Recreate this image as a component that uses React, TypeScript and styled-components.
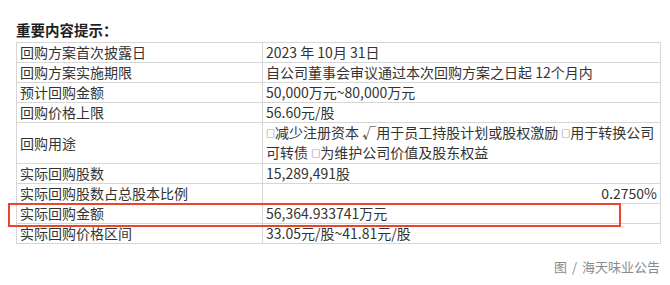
import React from 'react';
import styled, {createGlobalStyle} from 'styled-components';

const GlobalStyle = createGlobalStyle`
  body {
    margin: 0;
    background: #fff;
    font-family: "Noto Sans CJK SC", "Liberation Sans", sans-serif;
    color: #333;
  }
`;

const Page = styled.div`
  width: 670px;
  height: 285px;
  padding: 20px 9px 0 16px;
  box-sizing: border-box;
`;

const Title = styled.h3`
  margin: 0 0 2px;
  font-size: 14.5px;
  line-height: 20px;
  font-weight: 700;
  color: #1f1f1f;
`;

const Table = styled.table`
  border-collapse: collapse;
  width: 645px;
  table-layout: fixed;
  font-size: 14px;
  color: #333;
`;

const Cell = styled.td<{ $right?: boolean }>`
  border: 1px solid #d6d6d6;
  padding: 0 0 0 3px;
  height: 19px;
  line-height: 19px;
  white-space: nowrap;
  text-align: ${p => (p.$right ? 'right' : 'left')};
  ${p => p.$right && 'padding-right: 3px;'}
  vertical-align: middle;
  position: relative;
`;

const Box = styled.span`
  font-size: 9px;
  vertical-align: 1px;
`;

const Highlight = styled.span`
  position: absolute;
  left: -9px;
  top: -1px;
  width: 609px;
  height: 20px;
  border: 2px solid #e8452c;
  pointer-events: none;
`;

const Caption = styled.div`
  margin-top: 14px;
  text-align: right;
  padding-right: 1px;
  font-size: 13px;
  line-height: 18px;
  color: #8a8a8a;
  word-spacing: 2px;
`;

type Row = { label: string; value: React.ReactNode; right?: boolean; mark?: boolean };

const rows: Row[] = [
    {label: '回购方案首次披露日', value: '2023 年 10月 31日'},
    {label: '回购方案实施期限', value: '自公司董事会审议通过本次回购方案之日起 12个月内'},
    {label: '预计回购金额', value: '50,000万元~80,000万元'},
    {label: '回购价格上限', value: '56.60元/股'},
    {
        label: '回购用途',
        value: <>
            <Box>□</Box>减少注册资本 √用于员工持股计划或股权激励 <Box>□</Box>用于转换公司<br/>
            可转债 <Box>□</Box>为维护公司价值及股东权益
        </>
    },
    {label: '实际回购股数', value: '15,289,491股'},
    {label: '实际回购股数占总股本比例', value: '0.2750%', right: true},
    {label: '实际回购金额', value: '56,364.933741万元', mark: true},
    {label: '实际回购价格区间', value: '33.05元/股~41.81元/股'},
];

function App() {
    return (
        <Page>
            <GlobalStyle/>
            <Title>重要内容提示：</Title>
            <Table>
                <colgroup>
                    <col style={{width: 246}}/>
                    <col/>
                </colgroup>
                <tbody>
                {rows.map(r =>
                    <tr key={r.label}>
                        <Cell>
                            {r.label}
                            {r.mark && <Highlight/>}
                        </Cell>
                        <Cell $right={r.right}>{r.value}</Cell>
                    </tr>
                )}
                </tbody>
            </Table>
            <Caption>图 / 海天味业公告</Caption>
        </Page>
    );
}

export default App;
